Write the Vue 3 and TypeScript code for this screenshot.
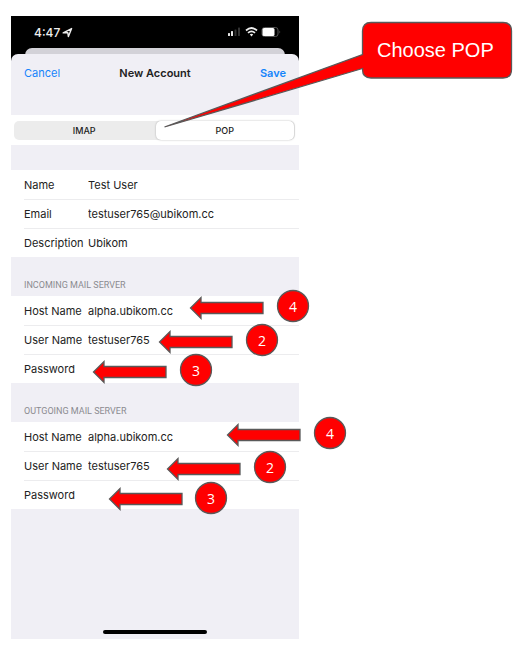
<script setup lang="ts">
import { ref } from 'vue'

interface Field {
  id: string
  label: string
  value: string
  type: string
}
interface Group {
  title: string
  fields: Field[]
}
interface Marker {
  step: number
  tip: [number, number]
  badge: [number, number]
}

const protocol = ref('POP')
const protocols = ['IMAP', 'POP']

const server = (prefix: string): Field[] => [
  { id: `${prefix}-host`, label: 'Host Name', value: 'alpha.ubikom.cc', type: 'text' },
  { id: `${prefix}-user`, label: 'User Name', value: 'testuser765', type: 'text' },
  { id: `${prefix}-password`, label: 'Password', value: '', type: 'password' },
]

const groups = ref<Group[]>([
  {
    title: '',
    fields: [
      { id: 'name', label: 'Name', value: 'Test User', type: 'text' },
      { id: 'email', label: 'Email', value: 'testuser765@ubikom.cc', type: 'text' },
      { id: 'description', label: 'Description', value: 'Ubikom', type: 'text' },
    ],
  },
  { title: 'INCOMING MAIL SERVER', fields: server('incoming') },
  { title: 'OUTGOING MAIL SERVER', fields: server('outgoing') },
])

const markers: Marker[] = [
  { step: 4, tip: [190, 308], badge: [293, 306] },
  { step: 2, tip: [159, 342], badge: [262, 340] },
  { step: 3, tip: [93, 372], badge: [196, 370] },
  { step: 4, tip: [227, 435], badge: [330, 433] },
  { step: 2, tip: [167, 469], badge: [270, 467] },
  { step: 3, tip: [109, 499], badge: [211, 498] },
]
</script>

<template>
  <main class="guide">
    <section class="phone">
      <div class="status">
        <span class="time">4:47</span>
        <svg class="locate" width="11" height="11" viewBox="0 0 11 11" aria-hidden="true">
          <path d="M1.2 5.9 9.6 1.6 6.4 9.6 5.8 5.7Z" />
        </svg>
        <svg class="indicators" width="54" height="12" viewBox="0 0 54 12" aria-hidden="true">
          <g fill="#e8e8e8">
            <rect x="0" y="7" width="2" height="3" rx=".5" />
            <rect x="3" y="5" width="2" height="5" rx=".5" />
          </g>
          <g fill="#333">
            <rect x="6.5" y="3.5" width="2" height="6.5" rx=".5" />
            <rect x="10" y="1.5" width="2" height="8.5" rx=".5" />
          </g>
          <g fill="none" stroke="#eee" stroke-width="1.7">
            <path d="M18 4.5Q23.500 -.5 29 4.5" />
            <path d="M20 6.9Q23.500 3.7 27 6.900" />
          </g>
          <path d="M21.8 8.5Q23.500 7.100 25.200 8.500L23.500 10.600Z" fill="#eee" />
          <rect x="34" y="1.5" width="16" height="9" rx="2.5" fill="none" stroke="#555" />
          <rect x="34.500" y="2" width="12" height="8" rx="1.5" fill="#fff" />
          <path d="M51.5 4.5Q53 6 51.5 7.5Z" fill="#666" />
        </svg>
      </div>
      <div class="behind"></div>
      <form class="sheet" @submit.prevent>
        <header class="bar">
          <button type="button" class="action">Cancel</button>
          <h1>New Account</h1>
          <button type="submit" class="action save">Save</button>
        </header>
        <div class="switch-band">
          <div class="switch" role="radiogroup" aria-label="Account type">
            <label v-for="p in protocols" :key="p" :class="{ on: protocol === p }">
              <input v-model="protocol" type="radio" name="protocol" :value="p" />{{ p }}
            </label>
          </div>
        </div>
        <section v-for="(group, i) in groups" :key="i" class="group" :class="{ plain: !group.title }">
          <h2 v-if="group.title">{{ group.title }}</h2>
          <div class="rows">
            <div v-for="field in group.fields" :key="field.id" class="row">
              <label :for="field.id">{{ field.label }}</label>
              <input :id="field.id" v-model="field.value" :type="field.type" autocomplete="off" spellcheck="false" />
            </div>
          </div>
        </section>
        <div class="home"></div>
      </form>
    </section>

    <svg class="notes" width="529" height="656" viewBox="0 0 529 656">
      <g class="shape">
        <path d="M371 22.5H503Q511.5 22.5 511.5 31V69.5Q511.5 78 503 78H371Q362.5 78 362.5 69.5V68.5L164.5 127 362.5 54.5V31Q362.5 22.5 371 22.5Z" />
        <path
          v-for="(m, i) in markers"
          :key="i"
          :transform="`translate(${m.tip[0]} ${m.tip[1]})`"
          d="M.5 0 11 -10.5V-5.5H73V5.5H11V10.5Z"
        />
        <circle v-for="(m, i) in markers" :key="`c${i}`" :cx="m.badge[0]" :cy="m.badge[1]" r="15.5" />
      </g>
      <text class="callout" x="377" y="57">Choose POP</text>
      <text v-for="(m, i) in markers" :key="`t${i}`" class="step" :x="m.badge[0]" :y="m.badge[1] + 6">{{ m.step }}</text>
    </svg>
  </main>
</template>

<style>
body {
  background: #fff;
}
</style>

<style scoped>
.guide {
  position: relative;
  padding: 16px 11px;
  font-family: Inter, "Liberation Sans", sans-serif;
  color: #222;
}
.phone {
  display: flex;
  flex-direction: column;
  width: 288px;
  background: #000;
}
.status {
  display: flex;
  align-items: center;
  height: 32px;
  padding: 0 17px 0 23px;
  color: #eee;
}
.time {
  font-size: 12px;
  font-weight: 500;
}
.locate {
  margin-left: 2px;
  fill: none;
  stroke: #eee;
  stroke-width: 1.4;
  stroke-linejoin: round;
}
.indicators {
  margin-left: auto;
}
.behind {
  height: 12px;
  margin: 0 14px -6px;
  border-radius: 7px 7px 0 0;
  background: #d3d2d8;
}
.sheet {
  display: flex;
  flex-direction: column;
  border-radius: 7px 7px 0 0;
  background: #f0eff5;
}
.bar {
  display: grid;
  grid-template-columns: 1fr auto 1fr;
  align-items: center;
  height: 38px;
  padding: 0 13px;
  margin-bottom: 23px;
}
h1 {
  margin: 0;
  font-size: 11px;
  font-weight: 600;
}
.action {
  justify-self: start;
  padding: 0;
  border: 0;
  background: none;
  font: 400 11px Inter, "Liberation Sans", sans-serif;
  color: #1584fb;
}
.save {
  justify-self: end;
  font-weight: 600;
}
.switch-band {
  padding: 6px 4px 5px 3px;
  background: #fff;
}
.switch {
  display: grid;
  grid-template-columns: 1fr 1fr;
  height: 19px;
  border-radius: 5px;
  background: #ececec;
}
.switch label {
  display: flex;
  align-items: center;
  justify-content: center;
  margin: 0 1px;
  border-radius: 5px;
  font-size: 9px;
  font-weight: 500;
}
.switch .on {
  background: #fff;
  box-shadow: 0 0 2px rgba(0, 0, 0, 0.3);
}
.switch input {
  position: absolute;
  width: 1px;
  height: 1px;
  margin: 0;
  opacity: 0;
}
.plain {
  padding-top: 25px;
}
h2 {
  display: flex;
  align-items: flex-end;
  height: 34px;
  margin: 0;
  padding: 0 13px 5px;
  font-family: Roboto, "Liberation Sans", sans-serif;
  font-size: 9px;
  line-height: 12px;
  font-weight: 400;
  color: #8b8b90;
}
.rows {
  background: #fff;
}
.row {
  display: flex;
  align-items: center;
  height: 29px;
  margin-left: 13px;
}
.row + .row {
  box-shadow: inset 0 1px #ececee;
}
.row label {
  flex: 0 0 64px;
  font-size: 11px;
  white-space: nowrap;
}
.row input {
  flex: 1;
  min-width: 0;
  padding: 1px 0 0;
  border: 0;
  outline: 0;
  background: none;
  font: 400 11px Inter, "Liberation Sans", sans-serif;
  color: #222;
}
.home {
  align-self: center;
  width: 104px;
  height: 4px;
  margin: 121px 0 5px;
  border-radius: 2px;
  background: #000;
}
.notes {
  position: absolute;
  top: 0;
  left: 0;
  pointer-events: none;
}
.shape {
  fill: #f00;
  stroke: #595959;
  stroke-width: 1.3;
}
.notes text {
  fill: #fff;
}
.callout {
  font: 400 20px "Liberation Sans", sans-serif;
}
.step {
  font: 500 14px "Open Sans", "Noto Sans", sans-serif;
  text-anchor: middle;
}
</style>
